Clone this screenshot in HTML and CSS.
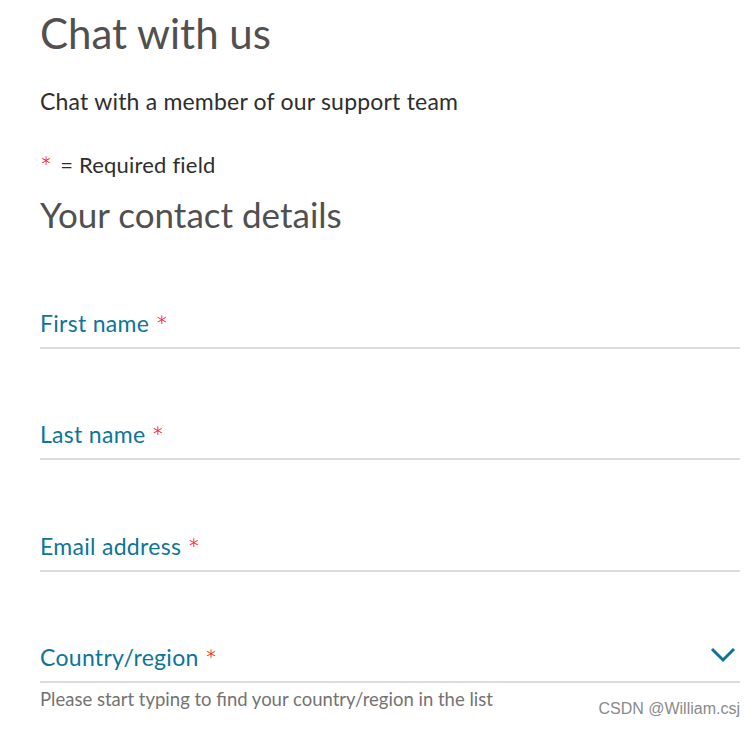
FILE: index.html
```html
<!DOCTYPE html>
<html lang="en">
<head>
<meta charset="utf-8">
<title>Chat with us</title>
<link rel="stylesheet" href="styles.css">
</head>
<body>
<main class="page">
  <h1 class="title">Chat with us</h1>
  <p class="intro">Chat with a member of our support team</p>
  <p class="required-note"><span class="req">*</span> = Required field</p>
  <h2 class="section-title">Your contact details</h2>
  <form class="form">
    <div class="field">
      <label class="label">First name <span class="req">*</span></label>
    </div>
    <div class="field">
      <label class="label">Last name <span class="req">*</span></label>
    </div>
    <div class="field">
      <label class="label">Email address <span class="req">*</span></label>
    </div>
    <div class="field field-select">
      <label class="label">Country/region <span class="req">*</span></label>
      <svg class="chevron" width="26" height="16" viewBox="0 0 26 16" aria-hidden="true">
        <polyline points="2,2 13,13 24,2" fill="none" stroke="#0c7598" stroke-width="3"/>
      </svg>
    </div>
    <p class="hint">Please start typing to find your country/region in the list</p>
  </form>
  <div class="watermark">CSDN @William.csj</div>
</main>
</body>
</html>
```
FILE: styles.css
```css
html, body {
  margin: 0;
  padding: 0;
  background: #fff;
}
body {
  font-family: "Lato", "Noto Sans", sans-serif;
}
.page {
  position: relative;
  padding: 0 15px 0 40px;
  height: 729px;
  box-sizing: border-box;
}
.title {
  margin: 0;
  padding-top: 6px;
  font-size: 42px;
  font-weight: 400;
  line-height: 54px;
  color: #505050;
}
.intro {
  margin: 28px 0 0;
  font-size: 23px;
  letter-spacing: 0.2px;
  line-height: 26px;
  color: #2e2e2e;
}
.required-note {
  margin: 38px 0 0;
  font-size: 22px;
  letter-spacing: 0.2px;
  line-height: 26px;
  color: #2e2e2e;
}
.req {
  color: #ff0000;
  font-size: 1.3em;
  font-weight: 300;
  line-height: 0;
  vertical-align: -0.16em;
  margin-right: 2px;
}
.section-title {
  margin: 14px 0 0;
  font-size: 35px;
  font-weight: 400;
  line-height: 44px;
  color: #505050;
}
.form {
  display: flex;
  flex-direction: column;
}
.field {
  display: flex;
  align-items: flex-end;
  justify-content: space-between;
  height: 111px;
  box-sizing: border-box;
  border-bottom: 2px solid #dcdcdc;
  padding-bottom: 11px;
}
.field:first-child {
  height: 113px;
}
.field:nth-child(3) {
  height: 112px;
}
.label {
  font-size: 23px;
  letter-spacing: 0.3px;
  line-height: 26px;
  color: #0c7598;
}
.chevron {
  margin: 0 4px 7px 0;
}
.hint {
  margin: 5px 0 0;
  font-size: 18.5px;
  line-height: 22px;
  color: #737373;
}
.watermark {
  position: absolute;
  right: 15px;
  top: 700px;
  font-family: "Liberation Sans", Arial, sans-serif;
  font-size: 16px;
  color: #8a8a8a;
}
```
